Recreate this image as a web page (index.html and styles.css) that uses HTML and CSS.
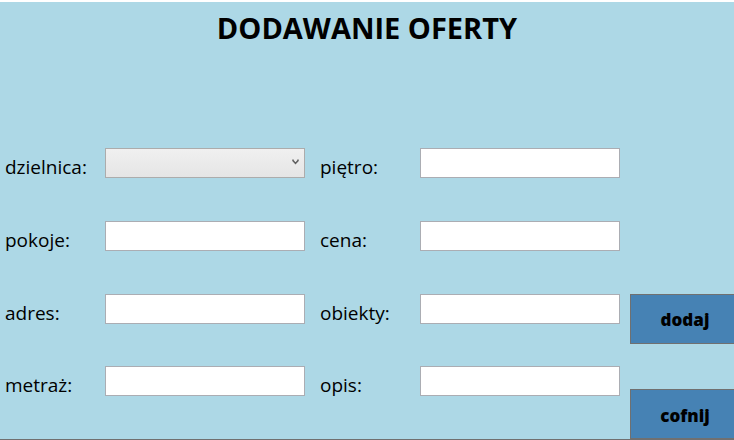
FILE: index.html
```
<!DOCTYPE html>
<html lang="pl">
<head>
<meta charset="utf-8">
<title>Dodawanie oferty</title>
<link rel="stylesheet" href="styles.css">
</head>
<body>
<main class="window">
  <h1 class="title">DODAWANIE OFERTY</h1>
  <form class="offer">
    <label for="dzielnica">dzielnica:</label>
    <div class="picker">
      <select class="field select" id="dzielnica"><option></option></select>
      <svg class="arrow" viewBox="0 0 7 6" aria-hidden="true"><path d="M1 0.5 V1.6 L3.5 4.4 L6 1.6 V0.5"/></svg>
    </div>
    <label for="pietro">piętro:</label>
    <input class="field" id="pietro" type="text">

    <label class="first" for="pokoje">pokoje:</label>
    <input class="field" id="pokoje" type="text">
    <label for="cena">cena:</label>
    <input class="field" id="cena" type="text">

    <label class="first" for="adres">adres:</label>
    <input class="field" id="adres" type="text">
    <label for="obiekty">obiekty:</label>
    <input class="field" id="obiekty" type="text">
    <button class="button" type="submit">dodaj</button>

    <label class="first" for="metraz">metraż:</label>
    <input class="field" id="metraz" type="text">
    <label for="opis">opis:</label>
    <input class="field" id="opis" type="text">
    <button class="button back" type="button">cofnij</button>
  </form>
</main>
</body>
</html>
```

FILE: styles.css
```
* {
  box-sizing: border-box;
}

body {
  margin: 0;
  font-family: "Open Sans", "Noto Sans", sans-serif;
  color: #000;
}

.window {
  display: flex;
  flex-direction: column;
  min-height: 100vh;
  overflow: hidden;
  background: #add8e6;
  border-top: 2px solid #fff;
  border-bottom: 1px solid #707070;
}

.title {
  margin: 0;
  padding-top: 6px;
  height: 146px;
  font-size: 29px;
  line-height: 40px;
  font-weight: 700;
  text-align: center;
}

.offer {
  flex: 1;
  display: grid;
  grid-template-columns: 85px 200px 85px 200px 110px;
  grid-template-rows: repeat(4, 1fr);
  column-gap: 15px;
  align-items: start;
  padding-left: 5px;
}

.first {
  grid-column: 1;
}

label {
  padding-top: 5px;
  font-size: 19px;
  line-height: 28px;
  white-space: nowrap;
}

.field {
  display: block;
  width: 100%;
  height: 30px;
  margin: 0;
  padding: 0 5px;
  border: 1px solid #abadb3;
  border-radius: 0;
  background: #fff;
  font: inherit;
  font-size: 19px;
}

.picker {
  position: relative;
}

.select {
  appearance: none;
  border-color: #acacac;
  background: linear-gradient(#f0f0f0, #e5e5e5);
}

.arrow {
  position: absolute;
  top: 11px;
  right: 6px;
  width: 7px;
  height: 6px;
  fill: none;
  stroke: #606060;
  stroke-width: 1.5;
  pointer-events: none;
}

.button {
  width: 110px;
  height: 50px;
  margin-left: -5px;
  padding: 2px 0 0;
  border: 1px solid #707070;
  background: #4682b4;
  color: #000;
  font-family: inherit;
  font-size: 17px;
  font-weight: 800;
}

.back {
  align-self: end;
}
```
